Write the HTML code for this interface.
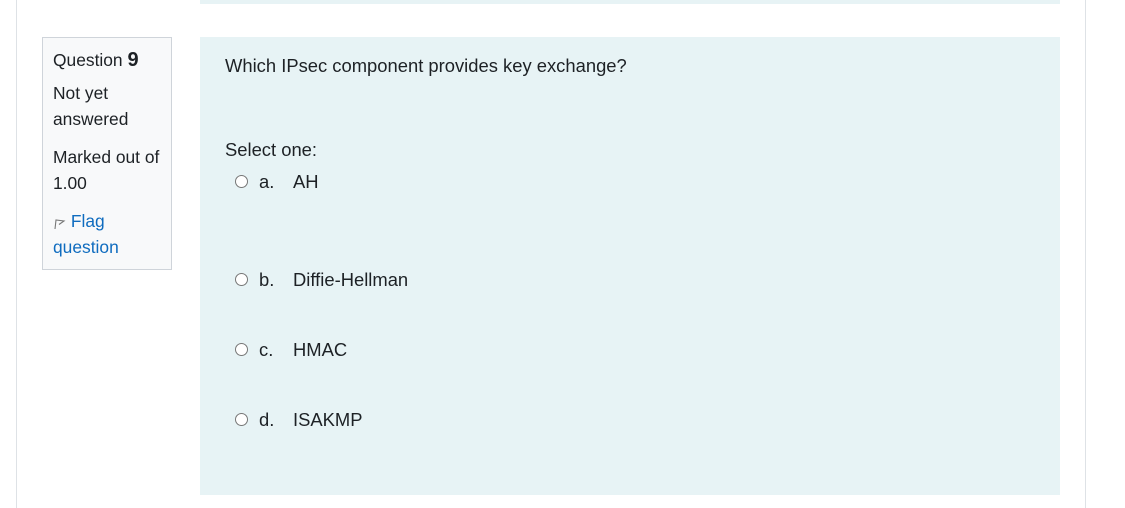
<!DOCTYPE html>
<html><head><style>
body{margin:0;width:1125px;height:508px;background:#fff;font-family:"Liberation Sans",sans-serif;color:#1d2125;position:relative;overflow:hidden;font-size:17.4px}
.l{position:absolute;left:16px;top:0;width:1px;height:508px;background:#dee2e6}
.r{position:absolute;left:1085px;top:0;width:1px;height:508px;background:#dee2e6}
.top{position:absolute;left:200px;top:0;width:860px;height:4px;background:#e7f3f5}
.info{position:absolute;left:42px;top:37px;width:128px;height:231px;background:#f8f9fa;border:1px solid #cfd4da}
.info div{position:absolute;left:10px;line-height:26px}
.q{position:absolute;left:200px;top:37px;width:860px;height:458px;background:#e7f3f5;font-size:18.4px}
.t{position:absolute;white-space:nowrap}
.rad{position:absolute;width:11px;height:11px;border:1px solid #777;border-radius:50%;background:#fff}
a{color:#0f6cbf;text-decoration:none}
</style></head><body>
<div class="l"></div><div class="r"></div><div class="top"></div>
<div class="info">
<div style="top:9px">Question <b style="font-size:20px">9</b></div>
<div style="top:42px">Not yet<br>answered</div>
<div style="top:106px">Marked out of<br>1.00</div>
<div style="top:170px;color:#0f6cbf"><svg width="13" height="13" viewBox="0 0 13 13" style="vertical-align:-3px"><path d="M2 12L3 3l8 1-5 3.5" fill="none" stroke="#777" stroke-width="1.1"/></svg> <a>Flag</a><br><a>question</a></div>
</div>
<div class="q">
<div class="t" style="left:25px;top:18px">Which IPsec component provides key exchange?</div>
<div class="t" style="left:25px;top:102px">Select one:</div>
<div class="rad" style="left:35px;top:138px"></div><div class="t" style="left:59px;top:134px">a.</div><div class="t" style="left:93px;top:134px">AH</div>
<div class="rad" style="left:35px;top:236px"></div><div class="t" style="left:59px;top:232px">b.</div><div class="t" style="left:93px;top:232px">Diffie-Hellman</div>
<div class="rad" style="left:35px;top:306px"></div><div class="t" style="left:59px;top:302px">c.</div><div class="t" style="left:93px;top:302px">HMAC</div>
<div class="rad" style="left:35px;top:376px"></div><div class="t" style="left:59px;top:372px">d.</div><div class="t" style="left:93px;top:372px">ISAKMP</div>
</div>
</body></html>
